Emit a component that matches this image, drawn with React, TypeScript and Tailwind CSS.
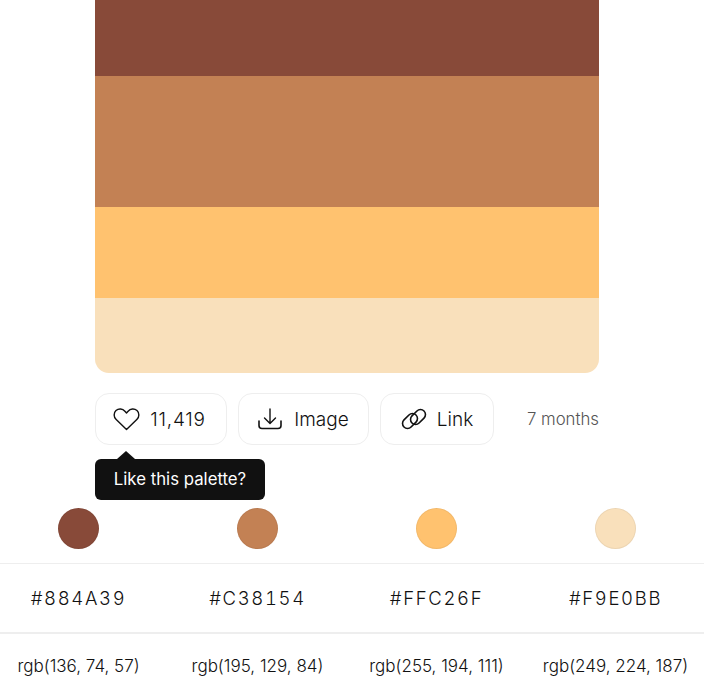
const colors = [
  { hex: "#884A39", rgb: "rgb(136, 74, 57)", dot: "bg-[#884a39]" },
  { hex: "#C38154", rgb: "rgb(195, 129, 84)", dot: "bg-[#c38154]" },
  { hex: "#FFC26F", rgb: "rgb(255, 194, 111)", dot: "bg-[#ffc26f]" },
  { hex: "#F9E0BB", rgb: "rgb(249, 224, 187)", dot: "bg-[#f9e0bb]" },
];

function HeartIcon() {
  return (
    <svg viewBox="0 0 27 24" className="h-[24px] w-[27px]" fill="none" stroke="currentColor" strokeWidth={1.4} strokeLinejoin="round">
      <path d="M13.5 22.5 3.2 12.6C.4 9.8.6 5.8 3 3.6c2.6-2.3 6.6-2 8.9.6l1.6 1.8 1.6-1.8c2.3-2.6 6.3-2.9 8.9-.6 2.4 2.2 2.6 6.2-.2 9L13.5 22.5Z" />
    </svg>
  );
}

function DownloadIcon() {
  return (
    <svg viewBox="0 0 24 22" className="h-[22px] w-[24px]" fill="none" stroke="currentColor" strokeWidth={1.4} strokeLinecap="round" strokeLinejoin="round">
      <path d="M12 1v14M6.500 10l5.500 5.500 5.500-5.500" />
      <path d="M1 13v4.500C1 19.500 2.500 20.500 4 20.500h16c1.500 0 3-1 3-3V13" strokeWidth={1.6} />
    </svg>
  );
}

function LinkIcon() {
  return (
    <svg viewBox="0 0 26 24" className="h-[24px] w-[26px]" fill="none" stroke="currentColor" strokeWidth={1.6}>
      <rect x="0.500" y="9" width="17" height="10" rx="5" transform="rotate(-45 9 14)" />
      <rect x="8.500" y="5" width="17" height="10" rx="5" transform="rotate(-45 17 10)" />
    </svg>
  );
}

export default function App() {
  return (
    <div className="relative h-[696px] w-[704px] overflow-hidden bg-white font-['Inter',sans-serif] text-[#111]">
      <div className="ml-[95px] w-[504px]">
        <div className="overflow-hidden rounded-b-[14px]">
          <div className="h-[76px] bg-[#884a39]" />
          <div className="h-[131px] bg-[#c38154]" />
          <div className="h-[91px] bg-[#ffc26f]" />
          <div className="h-[75px] bg-[#f9e0bb]" />
        </div>

        <div className="relative mt-5 flex h-[52px] items-center">
          <button className="flex h-[52px] w-[132px] items-center justify-center gap-[10px] rounded-[14px] border border-[#eeeeee] pr-[3px] text-[19px] font-light tracking-[0.04em]">
            <HeartIcon />
            <span className="mt-[2px]">11,419</span>
          </button>
          <button className="ml-[11px] flex h-[52px] w-[131px] items-center justify-center gap-[12px] rounded-[14px] border border-[#eeeeee] text-[19px] font-light">
            <DownloadIcon />
            <span className="mt-[2px]">Image</span>
          </button>
          <button className="ml-[11px] flex h-[52px] w-[114px] items-center justify-center gap-[10px] rounded-[14px] border border-[#eeeeee] text-[19px] font-light">
            <LinkIcon />
            <span className="mt-[2px]">Link</span>
          </button>
          <span className="mt-[2px] ml-auto text-[16.800px] font-light text-[#555]">7 months</span>

          <div className="absolute left-0 top-[66px] flex h-[41px] w-[170px] items-center justify-center rounded-md bg-[#111] text-[16.800px] text-white">
            Like this palette?
            <span className="absolute -top-[8px] left-[22px] h-0 w-0 border-x-[9px] border-b-[8px] border-x-transparent border-b-[#111]" />
          </div>
        </div>
      </div>

      <div className="mt-[63px] -ml-[11px] grid w-[716px] grid-cols-4 justify-items-center">
        {colors.map((color) => (
          <div key={color.hex} className="flex h-[55px] items-start">
            <div className={`h-[41px] w-[41px] rounded-full border border-black/5 ${color.dot}`} />
          </div>
        ))}
      </div>

      <div className="border-t border-[#eeeeee]">
        <div className="-ml-[11px] grid h-[68px] w-[716px] grid-cols-4 items-center text-center text-[18.500px] font-light tracking-[0.09em] tabular-nums">
          {colors.map((color) => (
            <span key={color.hex} className="mt-[1px]">{color.hex}</span>
          ))}
        </div>
      </div>

      <div className="border-t-2 border-[#eeeeee]">
        <div className="-ml-[11px] grid h-[66px] w-[716px] grid-cols-4 items-center text-center text-[17px] font-light">
          {colors.map((color) => (
            <span key={color.rgb} className="-mt-[1px]">{color.rgb}</span>
          ))}
        </div>
      </div>
    </div>
  );
}
